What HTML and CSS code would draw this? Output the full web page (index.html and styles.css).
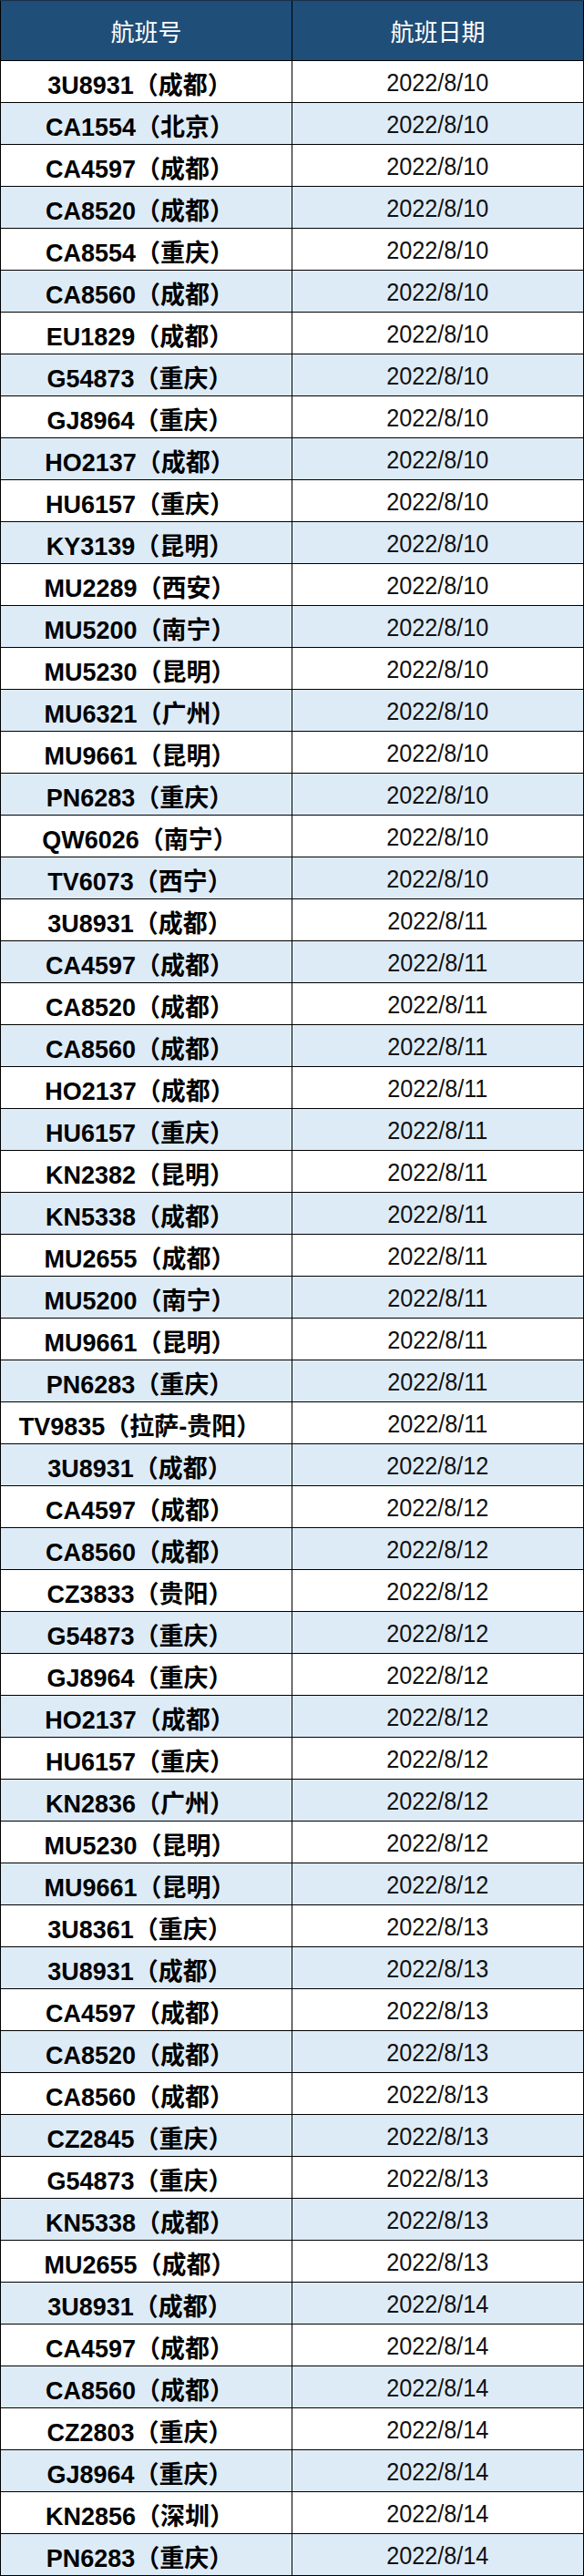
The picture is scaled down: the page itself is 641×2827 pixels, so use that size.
FILE: index.html
```html
<!DOCTYPE html>
<html lang="zh-CN">
<head>
<meta charset="utf-8">
<title>航班表</title>
<link rel="stylesheet" href="styles.css">
</head>
<body>
<div class="table">
  <div class="row head"><div class="c1">航班号</div><div class="c2">航班日期</div></div>
  <div class="row"><div class="c1">3U8931（成都）</div><div class="c2"><span>2022/8/10</span></div></div>
  <div class="row alt"><div class="c1">CA1554（北京）</div><div class="c2"><span>2022/8/10</span></div></div>
  <div class="row"><div class="c1">CA4597（成都）</div><div class="c2"><span>2022/8/10</span></div></div>
  <div class="row alt"><div class="c1">CA8520（成都）</div><div class="c2"><span>2022/8/10</span></div></div>
  <div class="row"><div class="c1">CA8554（重庆）</div><div class="c2"><span>2022/8/10</span></div></div>
  <div class="row alt"><div class="c1">CA8560（成都）</div><div class="c2"><span>2022/8/10</span></div></div>
  <div class="row"><div class="c1">EU1829（成都）</div><div class="c2"><span>2022/8/10</span></div></div>
  <div class="row alt"><div class="c1">G54873（重庆）</div><div class="c2"><span>2022/8/10</span></div></div>
  <div class="row"><div class="c1">GJ8964（重庆）</div><div class="c2"><span>2022/8/10</span></div></div>
  <div class="row alt"><div class="c1">HO2137（成都）</div><div class="c2"><span>2022/8/10</span></div></div>
  <div class="row"><div class="c1">HU6157（重庆）</div><div class="c2"><span>2022/8/10</span></div></div>
  <div class="row alt"><div class="c1">KY3139（昆明）</div><div class="c2"><span>2022/8/10</span></div></div>
  <div class="row"><div class="c1">MU2289（西安）</div><div class="c2"><span>2022/8/10</span></div></div>
  <div class="row alt"><div class="c1">MU5200（南宁）</div><div class="c2"><span>2022/8/10</span></div></div>
  <div class="row"><div class="c1">MU5230（昆明）</div><div class="c2"><span>2022/8/10</span></div></div>
  <div class="row alt"><div class="c1">MU6321（广州）</div><div class="c2"><span>2022/8/10</span></div></div>
  <div class="row"><div class="c1">MU9661（昆明）</div><div class="c2"><span>2022/8/10</span></div></div>
  <div class="row alt"><div class="c1">PN6283（重庆）</div><div class="c2"><span>2022/8/10</span></div></div>
  <div class="row"><div class="c1">QW6026（南宁）</div><div class="c2"><span>2022/8/10</span></div></div>
  <div class="row alt"><div class="c1">TV6073（西宁）</div><div class="c2"><span>2022/8/10</span></div></div>
  <div class="row"><div class="c1">3U8931（成都）</div><div class="c2"><span>2022/8/11</span></div></div>
  <div class="row alt"><div class="c1">CA4597（成都）</div><div class="c2"><span>2022/8/11</span></div></div>
  <div class="row"><div class="c1">CA8520（成都）</div><div class="c2"><span>2022/8/11</span></div></div>
  <div class="row alt"><div class="c1">CA8560（成都）</div><div class="c2"><span>2022/8/11</span></div></div>
  <div class="row"><div class="c1">HO2137（成都）</div><div class="c2"><span>2022/8/11</span></div></div>
  <div class="row alt"><div class="c1">HU6157（重庆）</div><div class="c2"><span>2022/8/11</span></div></div>
  <div class="row"><div class="c1">KN2382（昆明）</div><div class="c2"><span>2022/8/11</span></div></div>
  <div class="row alt"><div class="c1">KN5338（成都）</div><div class="c2"><span>2022/8/11</span></div></div>
  <div class="row"><div class="c1">MU2655（成都）</div><div class="c2"><span>2022/8/11</span></div></div>
  <div class="row alt"><div class="c1">MU5200（南宁）</div><div class="c2"><span>2022/8/11</span></div></div>
  <div class="row"><div class="c1">MU9661（昆明）</div><div class="c2"><span>2022/8/11</span></div></div>
  <div class="row alt"><div class="c1">PN6283（重庆）</div><div class="c2"><span>2022/8/11</span></div></div>
  <div class="row"><div class="c1">TV9835（拉萨-贵阳）</div><div class="c2"><span>2022/8/11</span></div></div>
  <div class="row alt"><div class="c1">3U8931（成都）</div><div class="c2"><span>2022/8/12</span></div></div>
  <div class="row"><div class="c1">CA4597（成都）</div><div class="c2"><span>2022/8/12</span></div></div>
  <div class="row alt"><div class="c1">CA8560（成都）</div><div class="c2"><span>2022/8/12</span></div></div>
  <div class="row"><div class="c1">CZ3833（贵阳）</div><div class="c2"><span>2022/8/12</span></div></div>
  <div class="row alt"><div class="c1">G54873（重庆）</div><div class="c2"><span>2022/8/12</span></div></div>
  <div class="row"><div class="c1">GJ8964（重庆）</div><div class="c2"><span>2022/8/12</span></div></div>
  <div class="row alt"><div class="c1">HO2137（成都）</div><div class="c2"><span>2022/8/12</span></div></div>
  <div class="row"><div class="c1">HU6157（重庆）</div><div class="c2"><span>2022/8/12</span></div></div>
  <div class="row alt"><div class="c1">KN2836（广州）</div><div class="c2"><span>2022/8/12</span></div></div>
  <div class="row"><div class="c1">MU5230（昆明）</div><div class="c2"><span>2022/8/12</span></div></div>
  <div class="row alt"><div class="c1">MU9661（昆明）</div><div class="c2"><span>2022/8/12</span></div></div>
  <div class="row"><div class="c1">3U8361（重庆）</div><div class="c2"><span>2022/8/13</span></div></div>
  <div class="row alt"><div class="c1">3U8931（成都）</div><div class="c2"><span>2022/8/13</span></div></div>
  <div class="row"><div class="c1">CA4597（成都）</div><div class="c2"><span>2022/8/13</span></div></div>
  <div class="row alt"><div class="c1">CA8520（成都）</div><div class="c2"><span>2022/8/13</span></div></div>
  <div class="row"><div class="c1">CA8560（成都）</div><div class="c2"><span>2022/8/13</span></div></div>
  <div class="row alt"><div class="c1">CZ2845（重庆）</div><div class="c2"><span>2022/8/13</span></div></div>
  <div class="row"><div class="c1">G54873（重庆）</div><div class="c2"><span>2022/8/13</span></div></div>
  <div class="row alt"><div class="c1">KN5338（成都）</div><div class="c2"><span>2022/8/13</span></div></div>
  <div class="row"><div class="c1">MU2655（成都）</div><div class="c2"><span>2022/8/13</span></div></div>
  <div class="row alt"><div class="c1">3U8931（成都）</div><div class="c2"><span>2022/8/14</span></div></div>
  <div class="row"><div class="c1">CA4597（成都）</div><div class="c2"><span>2022/8/14</span></div></div>
  <div class="row alt"><div class="c1">CA8560（成都）</div><div class="c2"><span>2022/8/14</span></div></div>
  <div class="row"><div class="c1">CZ2803（重庆）</div><div class="c2"><span>2022/8/14</span></div></div>
  <div class="row alt"><div class="c1">GJ8964（重庆）</div><div class="c2"><span>2022/8/14</span></div></div>
  <div class="row"><div class="c1">KN2856（深圳）</div><div class="c2"><span>2022/8/14</span></div></div>
  <div class="row alt"><div class="c1">PN6283（重庆）</div><div class="c2"><span>2022/8/14</span></div></div>
</div>
</body>
</html>
```

FILE: styles.css
```css
html, body {
  margin: 0;
  padding: 0;
  background: #ffffff;
}

.table {
  width: 641px;
  display: flex;
  flex-direction: column;
}

.row {
  display: flex;
  height: 46px;
  box-sizing: border-box;
  border-bottom: 1px solid #000000;
  background: #ffffff;
}

.row.alt {
  background: #ddebf7;
}

.c1,
.c2 {
  box-sizing: border-box;
  display: flex;
  align-items: center;
  justify-content: center;
  height: 100%;
  padding-top: 3px;
  color: #000000;
  white-space: nowrap;
}

.c1 {
  width: 321px;
  border-left: 1px solid #000000;
  border-right: 1px solid #000000;
  font-family: "Liberation Sans", "Noto Sans CJK SC", sans-serif;
  font-weight: bold;
  font-size: 27px;
  padding-right: 14px;
}

.c2 {
  width: 320px;
  border-right: 1px solid #000000;
  font-family: "Liberation Sans", "Noto Sans CJK SC", sans-serif;
  font-weight: normal;
  font-size: 28px;
  color: #111111;
}

.c2 span {
  display: inline-block;
  transform: scaleX(0.9);
}

.row.head {
  height: 67px;
  border-top: 1px solid #1a2f47;
  background: #1f4e78;
}

.row.head .c1,
.row.head .c2 {
  font-family: "Noto Sans CJK SC", sans-serif;
  font-weight: normal;
  font-size: 26px;
  color: #ffffff;
  padding: 0;
}
```
